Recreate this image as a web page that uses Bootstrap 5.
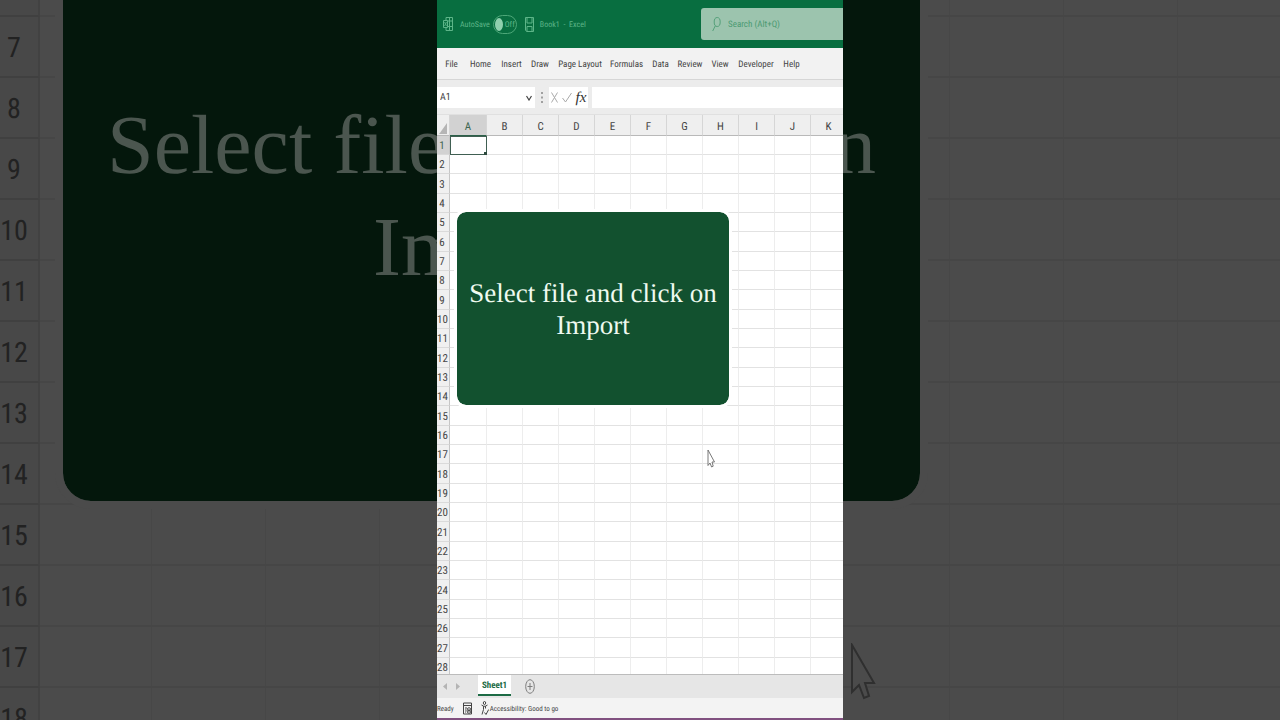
<!DOCTYPE html>
<html lang="en">
<head>
<meta charset="utf-8">
<meta name="viewport" content="width=device-width, initial-scale=1">
<title>Book1 - Excel</title>
<link href="https://cdn.jsdelivr.net/npm/bootstrap@5.3.0/dist/css/bootstrap.min.css" rel="stylesheet">
<style>
  :root { --ui: "Roboto Condensed", Roboto, sans-serif; --slide: "Liberation Serif", serif; }
  body { font-family: var(--ui); font-size: 9px; line-height: 16px; color: #444; background: #4b4b4b; text-rendering: geometricPrecision; }
  button, input { font: inherit; color: inherit; text-rendering: inherit; }
  button { border: 0; background: none; padding: 0; }
  svg { display: block; flex: none; }
  .stage { min-height: 100vh; grid-template-columns: 1fr minmax(0, 406px) 1fr; }
  .app { grid-column: 2; height: 100vh; background: #fff; }

  /* grids */
  .cells { table-layout: fixed; border-collapse: separate; border-spacing: 0; }
  .cells th, .cells td { padding: 0; font-weight: 400; text-align: center; overflow: hidden; white-space: nowrap; }

  /* dimmed enlargement behind the app */
  .zoomed { z-index: 0; }
  .zoomed .cells { width: 1406px; margin-top: -44px; font-size: 28px; line-height: 56px; color: #222; }
  .zoomed .cells col { width: 114px; }
  .zoomed .cells col:first-child { width: 40px; }
  .zoomed .cells col:nth-child(2) { width: 112px; }
  .zoomed .cells tr { height: 61px; }
  .zoomed .cells th { background: #484848; border-right: 2px solid #424242; border-bottom: 2px solid #404040; padding: 3px 10px 0 0; text-overflow: clip; }
  .zoomed .cells td { border-right: 1px solid #474747; border-bottom: 2px solid #464646; }
  .zoomed .slide { left: 63px; top: -108px; width: 857px; height: 609px; border-radius: 28px; background: #04170c; color: #4b564f; font-size: 84px; line-height: 102px; padding: 0 44px 202px; box-shadow: 0 0 0 2px #3c4540; outline: 8px solid #4b4b4b; }
  .zoomed .second { padding-left: 266px; }
  .zoomed .pointer { left: 851px; top: 643px; }

  /* title bar */
  .titlebar { height: 48px; background: #086e40; color: #5db588; padding-left: 6px; font-size: 8px; }
  .titlebar label, .titlebar .caption { padding-top: 1px; }
  .autosave-name { margin: 0 3px 0 7px; }
  .titlebar .caption { margin-left: 6px; }
  .autosave { border: 1px solid #4ca778; border-radius: 10px; width: 24px; height: 19px; gap: 2px; padding-left: 1px; }
  .autosave input { appearance: none; flex: none; width: 8px; height: 13px; border-radius: 50%; background: #8fd0ae; margin: 0; }
  .finder { width: 142px; height: 32px; background: #9cc4ae; color: #55a07a; border-radius: 3px 0 0 3px; padding-left: 11px; gap: 7px; font-size: 9px; }
  .finder input, .fx-row input { border: 0; background: transparent; outline: 0; padding: 0; min-width: 0; }
  .finder input::placeholder { color: #4b9a72; opacity: 1; }

  /* ribbon and formula bar */
  .ribbon { height: 32px; background: #f2f2f2; border-bottom: 1px solid #d6d6d6; grid-template-columns: 25px 33px 29px 28px 52px 41px 27px 32px 28px 44px 27px; padding: 2px 0 0 2px; }
  .ribbon button { white-space: nowrap; display: flex; align-items: center; justify-content: center; }
  .fx-row { height: 35px; background: #ececec; padding: 7px 0 6px; border-bottom: 1px solid #e0e0e0; }
  .namebox, .fx-tools, .fx-row .formula { background: #fff; }
  .namebox { width: 98px; padding: 1px 3px 0; font-size: 10px; }
  .namebox input { width: 70px; }
  .fx-row .dots { width: 14px; }
  .fx-tools { width: 39px; gap: 4px; margin-right: 4px; color: #aaa; }
  .fx-sign { font: italic 15px/20px "Liberation Serif", serif; color: #333; }

  /* worksheet */
  .sheet .cells { width: 410px; font-size: 11px; line-height: 17px; }
  .sheet .cells col { width: 36px; }
  .sheet .cells col:first-child { width: 13px; }
  .sheet .cells col:nth-child(2) { width: 37px; }
  .sheet thead tr { height: 21px; }
  .sheet tbody tr { height: 19px; }
  .sheet tbody tr:nth-child(3n) { height: 20px; }
  .sheet thead th { background: #efefef; border-bottom: 1px solid #b9b9b9; border-right: 1px solid #d6d6d6; padding-top: 3px; }
  .sheet tbody th { background: #f0f0f0; border-right: 1px solid #c6c6c6; border-bottom: 1px solid #dadada; padding: 1px 2px 0 0; text-overflow: clip; }
  .sheet td { border-right: 1px solid #ededed; border-bottom: 1px solid #e2e2e2; }
  .sheet thead th.on, .sheet tbody th.on { background: #d2d2d2; color: #3d6650; }
  .sheet thead th.on { border-bottom-color: #2c6149; }
  .sheet td.on { position: relative; overflow: visible; outline: 1px solid #405f52; outline-offset: -1px; }
  .sheet td.on::after { content: ""; position: absolute; right: -1px; bottom: -1px; width: 3px; height: 3px; background: #2d4a3e; }
  .sheet .slide { left: 20px; top: 97px; width: 272px; height: 193px; border-radius: 9px; background: #12512f; color: #effaf0; font-size: 27px; line-height: 32px; outline: 3px solid #fff; }
  .sheet .pointer { left: 270px; top: 334px; }
  .slide { font-family: var(--slide); }

  /* bottom bars */
  .tabs { height: 24px; background: #e6e6e6; border-top: 1px solid #bcbcbc; padding-left: 6px; }
  .tabs .arrow { width: 13px; color: #b4b4b4; }
  .tabs .current { width: 33px; margin: 0 14px 0 9px; height: 21px; background: #fff; color: #1d6b45; font-weight: 700; font-size: 9px; border-bottom: 2px solid #1d6b45; padding-top: 2px; }
  .status { height: 22px; background: #f3f3f3; border-bottom: 2px solid #80507f; font-size: 7px; }
  .status span { padding-top: 1px; }
  .status button { margin-left: 9px; gap: 1px; }
</style>
</head>
<body class="overflow-hidden">
<div class="stage d-grid position-relative overflow-hidden">

  <div class="zoomed position-absolute top-0 start-0 w-100 h-100 overflow-hidden" aria-hidden="true">
    <table class="cells" id="big"></table>
    <div class="slide position-absolute d-flex flex-column justify-content-end">
      <div class="d-flex justify-content-between"><span>Select file</span><span>n</span></div>
      <div class="second">Im</div>
    </div>
    <svg class="pointer position-absolute" width="25" height="58" viewBox="0 0 25 58"><path d="M1 2v47l7-7 5 13 5-2-4-13h9z" fill="#4b4b4b" stroke="#2f2f2f" stroke-width="2"/></svg>
  </div>

  <main class="app position-relative d-flex flex-column overflow-hidden">
    <header class="titlebar d-flex align-items-center flex-shrink-0">
      <svg width="10" height="16" viewBox="0 0 10 16" fill="none" stroke="currentColor"><path d="M3 1.500h6.500v13H3zM6.500 1.500v13M3 5h6.500M3 10.500h6.500"/><path d="M.5 4.500h4v7h-4z" fill="#086e40"/><path d="M1.500 6l2 4M3.500 6l-2 4" stroke-width=".8"/></svg>
      <label for="autosave" class="autosave-name">AutoSave</label>
      <label class="autosave d-flex align-items-center"><input type="checkbox" id="autosave">Off</label>
      <svg class="ms-2" width="9" height="17" viewBox="0 0 9 17" fill="none" stroke="currentColor"><path d="M.5 1.500h8v14H1.500l-1-1.500zM2 1.500V7h5V1.500M2 15v-4.500h5V15"/></svg>
      <span class="caption text-nowrap">Book1&nbsp; -&nbsp; Excel</span>
      <label class="finder d-flex align-items-center ms-auto flex-shrink-0"><svg width="9" height="17" viewBox="0 0 9 17" fill="none" stroke="currentColor"><ellipse cx="5.200" cy="6" rx="3" ry="4.500"/><path d="M3.300 9.800L.7 15"/></svg><input type="search" placeholder="Search (Alt+Q)" aria-label="Search"></label>
    </header>

    <nav class="ribbon d-grid flex-shrink-0" aria-label="Ribbon">
      <button>File</button><button>Home</button><button>Insert</button><button>Draw</button><button>Page Layout</button><button>Formulas</button><button>Data</button><button>Review</button><button>View</button><button>Developer</button><button>Help</button>
    </nav>

    <div class="fx-row d-flex flex-shrink-0">
      <div class="namebox d-flex align-items-center justify-content-between"><input value="A1" aria-label="Name box"><button aria-label="Open name list"><svg width="6" height="6" viewBox="0 0 6 6" fill="none" stroke="#444" stroke-width="1.200"><path d="M.5 1L3 5l2.500-4"/></svg></button></div>
      <div class="dots d-flex align-items-center justify-content-center"><svg width="2" height="11" fill="#a0a0a0"><path d="M0 0h2v2H0zM0 4.500h2v2H0zM0 9h2v2H0z"/></svg></div>
      <div class="fx-tools d-flex align-items-center justify-content-center">
        <button aria-label="Cancel"><svg width="7" height="11" viewBox="0 0 7 11" stroke="currentColor"><path d="M.5.5l6 10M6.500.5l-6 10"/></svg></button>
        <button aria-label="Enter"><svg width="10" height="11" viewBox="0 0 10 11" fill="none" stroke="currentColor"><path d="M.5 6l3 4L9.500 1"/></svg></button>
        <button class="fx-sign" aria-label="Insert function">fx</button>
      </div>
      <input class="formula flex-grow-1" aria-label="Formula bar">
    </div>

    <section class="sheet position-relative flex-grow-1 overflow-hidden">
      <table class="cells" id="grid"></table>
      <div class="slide position-absolute d-flex align-items-center justify-content-center text-center"><div>Select file and click on<br>Import</div></div>
      <svg class="pointer position-absolute" width="8" height="19" viewBox="0 0 8 19"><path d="M1 1v15.500l2-2.500 1.600 4 1.600-.8L5 13h2.500z" fill="#fff" stroke="#6a6a6a" stroke-width=".9"/></svg>
    </section>

    <div class="tabs d-flex flex-shrink-0">
      <button class="arrow" aria-label="Previous sheet"><svg width="4" height="7"><path d="M4 0v7L0 3.500z" fill="currentColor"/></svg></button>
      <button class="arrow" aria-label="Next sheet"><svg width="4" height="7"><path d="M0 0v7l4-3.500z" fill="currentColor"/></svg></button>
      <button class="current">Sheet1</button>
      <button aria-label="New sheet"><svg width="10" height="15" viewBox="0 0 10 15" fill="none" stroke="#7d7d7d"><ellipse cx="5" cy="7.500" rx="4.300" ry="6.800"/><path d="M5 4v7M2.500 7.500h5"/></svg></button>
    </div>
    <footer class="status d-flex align-items-center flex-shrink-0">
      <span>Ready</span>
      <button aria-label="Record macro"><svg width="9" height="13" viewBox="0 0 9 13" fill="none" stroke="#444"><path d="M.5 1h8v11h-8zM.5 3.500h8M2 6h2M2 8h1M2 10h1"/><ellipse cx="6" cy="8.500" rx="2" ry="2.800" fill="#f3f3f3"/><circle cx="6" cy="8.500" r=".8" fill="#444"/></svg></button>
      <button class="d-flex align-items-center"><svg width="8" height="15" viewBox="0 0 8 15" fill="none" stroke="#444"><ellipse cx="3.500" cy="2" rx="1.200" ry="1.500"/><path d="M.5 4l2 1.200v3.300L1 13.500M6.500 4l-2 1.200v2.300M2.500 5.200h2M3.500 11.500l1.500 2 2.700-5"/></svg><span>Accessibility: Good to go</span></button>
    </footer>
  </main>
</div>
<script src="https://cdn.jsdelivr.net/npm/bootstrap@5.3.0/dist/js/bootstrap.bundle.min.js"></script>
<script>
  function fill(id, first, last, letters, head) {
    const n = letters.length;
    let h = '<colgroup>' + '<col>'.repeat(n + 1) + '</colgroup>';
    if (head) h += '<thead><tr><th><svg width="12" height="17"><path d="M10 5v11H2z" fill="#b5b5b5"/></svg></th>' +
      [...letters].map((c, i) => `<th scope="col"${i ? '' : ' class="on"'}>${c}</th>`).join('') + '</tr></thead>';
    h += '<tbody>';
    for (let r = first; r <= last; r++) {
      const on = head && r === 1 ? ' class="on"' : '';
      h += `<tr><th scope="row"${on}>${r}</th><td${on}></td>${'<td></td>'.repeat(n - 1)}</tr>`;
    }
    document.getElementById(id).innerHTML = h + '</tbody>';
  }
  fill('grid', 1, 28, 'ABCDEFGHIJK', true);
  fill('big', 6, 18, 'ABCDEFGHIJKL', false);
</script>
</body>
</html>
